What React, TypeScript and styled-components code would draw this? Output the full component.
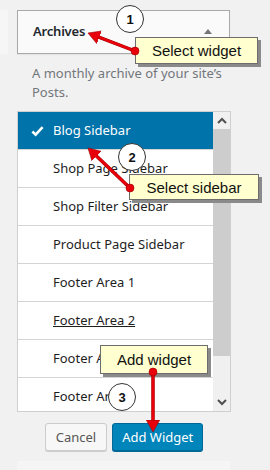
import React from "react";
import styled, { createGlobalStyle } from "styled-components";

const GlobalStyle = createGlobalStyle`
  html, body {
    margin: 0;
    padding: 0;
    background: #f1f1f1;
  }
  body {
    font-family: "Segoe UI", "Noto Sans", "Open Sans", sans-serif;
  }
`;

const sidebars = [
  "Blog Sidebar",
  "Shop Page Sidebar",
  "Shop Filter Sidebar",
  "Product Page Sidebar",
  "Footer Area 1",
  "Footer Area 2",
  "Footer Area 3",
  "Footer Area 4",
];

type Callout = {
  text: string;
  x: number;
  y: number;
  w: number;
  h: number;
};

const callouts: Callout[] = [
  { text: "Select widget", x: 135, y: 37, w: 123, h: 27 },
  { text: "Select sidebar", x: 129, y: 174, w: 130, h: 26 },
  { text: "Add widget", x: 100, y: 345, w: 108, h: 29 },
];

const steps = [
  { n: "1", x: 130, y: 19 },
  { n: "2", x: 132, y: 157 },
  { n: "3", x: 122, y: 397 },
];

// line ends stop short of the tip, the marker head covers the rest
const arrows = [
  { x1: 135, y1: 51, x2: 95.5, y2: 35.9 },
  { x1: 130, y1: 188, x2: 93.8, y2: 153.5 },
  { x1: 153, y1: 372, x2: 153, y2: 424 },
];

export default function App() {
  return (
    <>
      <GlobalStyle />
      <SPage>
        <SHeaderRow>
          <SStub />
          <SWidgetTitle>
            <span>Archives</span>
            <STriangle />
          </SWidgetTitle>
        </SHeaderRow>

        <SDescription>
          A monthly archive of your site’s
          <br />
          Posts.
        </SDescription>

        <SListBox>
          <SList>
            {sidebars.map((name, i) => (
              <SRow key={name} $selected={i === 0} $hover={name === "Footer Area 2"}>
                {i === 0 && (
                  <SCheck viewBox="0 0 14 12">
                    <path d="M1.5 6.5 L5 10 L12.5 1.8" fill="none" stroke="#fff" strokeWidth="2.8" />
                  </SCheck>
                )}
                <span>{name}</span>
              </SRow>
            ))}
          </SList>
          <SScrollbar>
            <SScrollBtn>
              <svg width="10" height="7" viewBox="0 0 10 7">
                <path d="M1 6 L5 2 L9 6" fill="none" stroke="#505050" strokeWidth="2" />
              </svg>
            </SScrollBtn>
            <SThumb />
            <SScrollTrack />
            <SScrollBtn>
              <svg width="10" height="7" viewBox="0 0 10 7">
                <path d="M1 1 L5 5 L9 1" fill="none" stroke="#505050" strokeWidth="2" />
              </svg>
            </SScrollBtn>
          </SScrollbar>
        </SListBox>

        <SButtons>
          <SButton>Cancel</SButton>
          <SButton $primary>Add Widget</SButton>
        </SButtons>

        <SNextWidget />

        {/* annotation layer */}
        {callouts.map((c) => (
          <SCallout key={c.text} style={{ left: c.x, top: c.y, width: c.w, height: c.h }}>
            {c.text}
          </SCallout>
        ))}
        <SArrows width="270" height="470" viewBox="0 0 270 470">
          <defs>
            <marker id="head" markerWidth="6" markerHeight="6" refX="1.5" refY="3" orient="auto" markerUnits="strokeWidth">
              <path d="M0 0.4 L4.6 3 L0 5.6 Z" fill="#e8000b" stroke="#9a0000" strokeWidth="0.2" />
            </marker>
          </defs>
          {arrows.map((a, i) => (
            <g key={i}>
              <line x1={a.x1} y1={a.y1} x2={a.x2} y2={a.y2} stroke="#9a0000" strokeWidth="3.4" />
              <line
                x1={a.x1}
                y1={a.y1}
                x2={a.x2}
                y2={a.y2}
                stroke="#e8000b"
                strokeWidth="2.6"
                markerEnd="url(#head)"
              />
              <circle cx={a.x1} cy={a.y1} r="4" fill="#e8000b" stroke="#9a0000" strokeWidth="0.6" />
            </g>
          ))}
        </SArrows>
        {steps.map((s) => (
          <SStep key={s.n} style={{ left: s.x - 14, top: s.y - 14 }}>
            {s.n}
          </SStep>
        ))}
      </SPage>
    </>
  );
}

const SPage = styled.div`
  position: relative;
  width: 270px;
  height: 470px;
  overflow: hidden;
  background: #f1f1f1;
`;

const SHeaderRow = styled.div`
  display: flex;
  gap: 9px;
  margin-top: 10px;
`;

const SStub = styled.div`
  width: 8px;
  height: 44px;
  background: #f6f6f6;
`;

const SWidgetTitle = styled.div`
  box-sizing: border-box;
  width: 213px;
  height: 44px;
  display: flex;
  align-items: center;
  justify-content: space-between;
  padding: 0 17px 2px 15px;
  background: #fafafa;
  border: 1px solid #a9a9a9;
  box-shadow: 0 1px 1px rgba(0, 0, 0, 0.05);
  font-size: 13px;
  font-weight: 600;
  letter-spacing: -0.2px;
  color: #23282d;
`;

const STriangle = styled.span`
  width: 0;
  height: 0;
  border-left: 4px solid transparent;
  border-right: 4px solid transparent;
  border-bottom: 5px solid #72777c;
`;

const SDescription = styled.p`
  margin: 10px 0 0 32px;
  font-size: 13px;
  line-height: 19px;
  color: #72777c;
`;

const SListBox = styled.div`
  box-sizing: border-box;
  display: flex;
  width: 214px;
  height: 301px;
  margin: 9px 0 0 17px;
  border: 1px solid #cfcfcf;
  background: #fff;
`;

const SList = styled.div`
  flex: 1;
  overflow: hidden;
`;

const SRow = styled.div<{ $selected?: boolean; $hover?: boolean }>`
  box-sizing: border-box;
  position: relative;
  height: 38px;
  display: flex;
  align-items: center;
  padding: 0 0 1px 35px;
  border-bottom: 1px solid #d4d4d4;
  background: ${(p) => (p.$selected ? "#0073aa" : "#fff")};
  color: ${(p) => (p.$selected ? "#fff" : "#1e1e1e")};
  font-size: 13px;
  text-decoration: ${(p) => (p.$hover ? "underline" : "none")};
  white-space: nowrap;
`;

const SCheck = styled.svg`
  position: absolute;
  left: 13px;
  top: 13px;
  width: 13px;
  height: 12px;
`;

const SScrollbar = styled.div`
  width: 17px;
  display: flex;
  flex-direction: column;
  background: #f0f0f0;
`;

const SScrollBtn = styled.div`
  height: 17px;
  display: flex;
  align-items: center;
  justify-content: center;
`;

const SThumb = styled.div`
  height: 227px;
  background: #cdcdcd;
`;

const SScrollTrack = styled.div`
  flex: 1;
`;

const SButtons = styled.div`
  display: flex;
  justify-content: center;
  gap: 5px;
  width: 214px;
  margin: 11px 0 0 17px;
`;

const SButton = styled.button<{ $primary?: boolean }>`
  box-sizing: border-box;
  height: 28px;
  padding: 0 ${(p) => (p.$primary ? "9px" : "10px")};
  border-radius: 3px;
  font-family: "Segoe UI", "Noto Sans", sans-serif;
  font-size: 13px;
  border: 1px solid ${(p) => (p.$primary ? "#006799" : "#cccccc")};
  background: ${(p) => (p.$primary ? "#0085ba" : "#f7f7f7")};
  color: ${(p) => (p.$primary ? "#fff" : "#555")};
  box-shadow: ${(p) => (p.$primary ? "0 1px 0 #006799" : "0 1px 0 #ccc")};
`;

const SNextWidget = styled.div`
  width: 213px;
  height: 10px;
  margin: 10px 0 0 17px;
  background: #f5f5f5;
`;

const SCallout = styled.div`
  position: absolute;
  box-sizing: border-box;
  display: flex;
  align-items: center;
  justify-content: center;
  background: #ffffcf;
  border: 1px solid #6d6d6d;
  box-shadow: 3px 3px 0 #8a8a8a;
  font-family: "Liberation Sans", Arial, sans-serif;
  font-size: 15px;
  color: #111;
`;

const SArrows = styled.svg`
  position: absolute;
  left: 0;
  top: 0;
  pointer-events: none;
`;

const SStep = styled.div`
  position: absolute;
  box-sizing: border-box;
  width: 28px;
  height: 28px;
  border-radius: 50%;
  border: 1.6px solid #333;
  background: #fff;
  display: flex;
  align-items: center;
  justify-content: center;
  font-family: "Liberation Sans", Arial, sans-serif;
  font-weight: bold;
  font-size: 13px;
  color: #111;
`;
